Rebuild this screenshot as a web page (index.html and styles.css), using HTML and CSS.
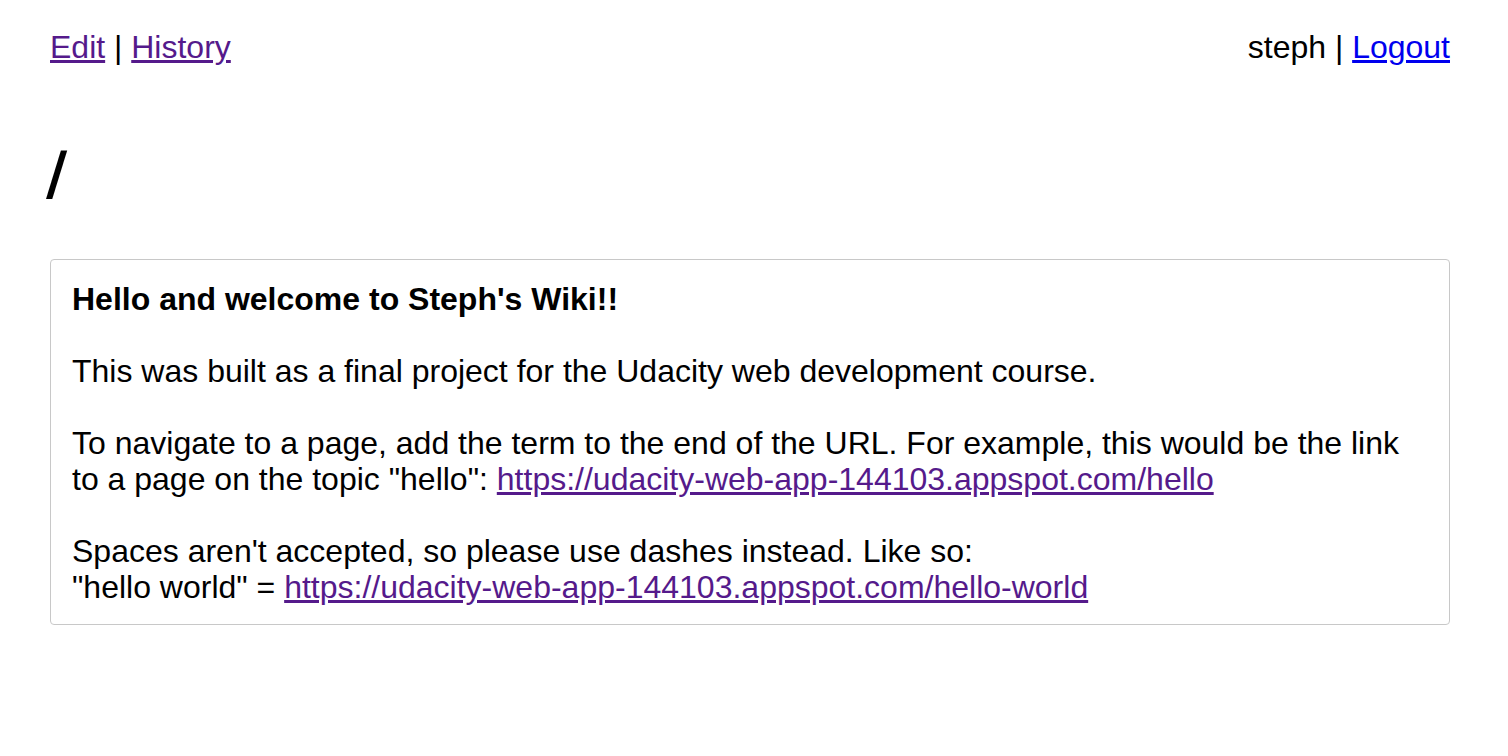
FILE: index.html
```html
<!DOCTYPE html>
<html>
<head>
<meta charset="utf-8">
<link rel="stylesheet" href="styles.css">
</head>
<body>
<div class="page">
  <div class="topbar">
    <div class="nav"><a class="visited" href="#">Edit</a> | <a class="visited" href="#">History</a></div>
    <div class="user">steph | <a class="fresh" href="#">Logout</a></div>
  </div>
  <h1 class="title">/</h1>
  <div class="content">
    <p class="lead">Hello and welcome to Steph's Wiki!!</p>
    <p>This was built as a final project for the Udacity web development course.</p>
    <p>To navigate to a page, add the term to the end of the URL. For example, this would be the link to a page on the topic "hello": <a class="visited" href="#">https://udacity-web-app-144103.appspot.com/hello</a></p>
    <p>Spaces aren't accepted, so please use dashes instead. Like so:<br>"hello world" = <a class="visited" href="#">https://udacity-web-app-144103.appspot.com/hello-world</a></p>
  </div>
</div>
</body>
</html>
```

FILE: styles.css
```css
html, body {
  margin: 0;
  padding: 0;
  background: #fff;
}
body {
  font-family: "Liberation Sans", Arial, Helvetica, sans-serif;
  font-size: 32px;
  line-height: 36px;
  color: #000;
}
.page {
  width: 1400px;
  margin-left: 50px;
  padding-top: 29px;
}
.topbar {
  display: flex;
  justify-content: space-between;
}
a.visited { color: #551a8b; text-decoration: underline; }
a.fresh { color: #0000ee; text-decoration: underline; }
.title {
  font-family: "DejaVu Sans", "Liberation Sans", sans-serif;
  font-size: 58px;
  line-height: 64px;
  font-weight: bold;
  margin: 77px 0 0 -4px;
}
.content {
  margin-top: 53px;
  border: 1px solid #c8c8c8;
  border-radius: 4px;
  padding: 21px 21px 19px 21px;
}
.content p {
  margin: 0 0 36px 0;
}
.content p:last-child { margin-bottom: 0; }
.content .lead { font-weight: bold; }
```
